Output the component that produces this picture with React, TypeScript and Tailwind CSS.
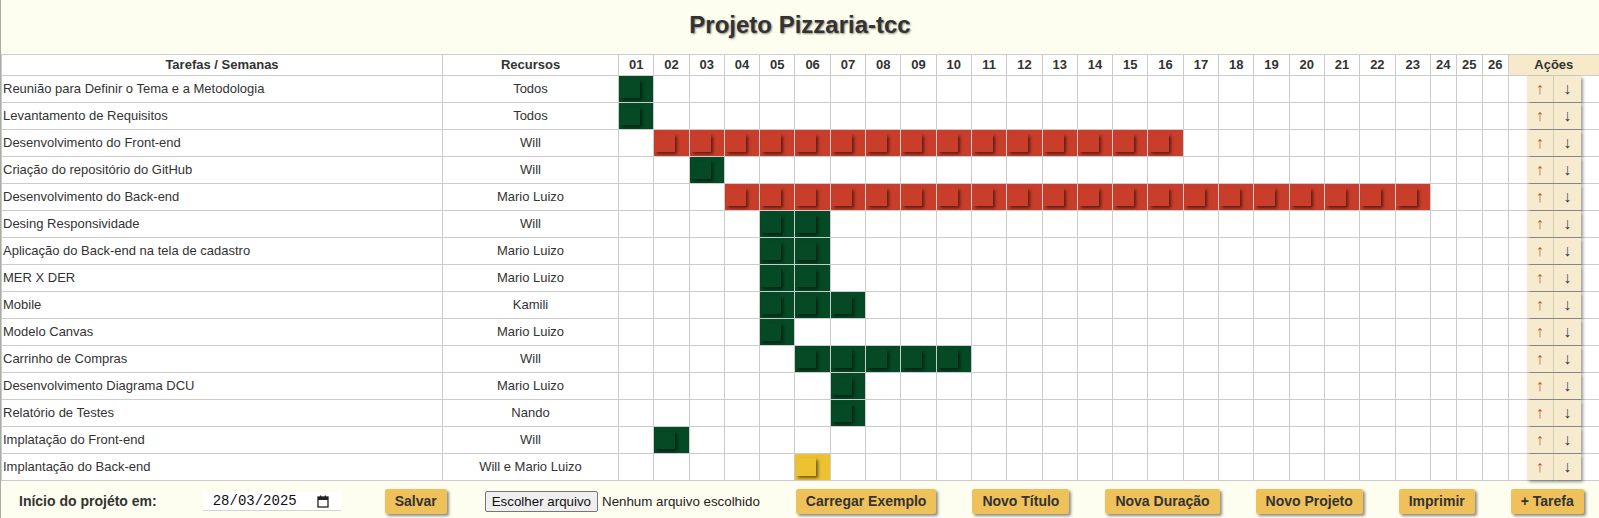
import React from "react"

type Color = "green" | "red" | "yellow"
type Task = { name: string; resource: string; start: number; end: number; color: Color }

const tasks: Task[] = [
	{ name: "Reunião para Definir o Tema e a Metodologia", resource: "Todos", start: 1, end: 1, color: "green" },
	{ name: "Levantamento de Requisitos", resource: "Todos", start: 1, end: 1, color: "green" },
	{ name: "Desenvolvimento do Front-end", resource: "Will", start: 2, end: 16, color: "red" },
	{ name: "Criação do repositório do GitHub", resource: "Will", start: 3, end: 3, color: "green" },
	{ name: "Desenvolvimento do Back-end", resource: "Mario Luizo", start: 4, end: 23, color: "red" },
	{ name: "Desing Responsividade", resource: "Will", start: 5, end: 6, color: "green" },
	{ name: "Aplicação do Back-end na tela de cadastro", resource: "Mario Luizo", start: 5, end: 6, color: "green" },
	{ name: "MER X DER", resource: "Mario Luizo", start: 5, end: 6, color: "green" },
	{ name: "Mobile", resource: "Kamili", start: 5, end: 7, color: "green" },
	{ name: "Modelo Canvas", resource: "Mario Luizo", start: 5, end: 5, color: "green" },
	{ name: "Carrinho de Compras", resource: "Will", start: 6, end: 10, color: "green" },
	{ name: "Desenvolvimento Diagrama DCU", resource: "Mario Luizo", start: 7, end: 7, color: "green" },
	{ name: "Relatório de Testes", resource: "Nando", start: 7, end: 7, color: "green" },
	{ name: "Implatação do Front-end", resource: "Will", start: 2, end: 2, color: "green" },
	{ name: "Implantação do Back-end", resource: "Will e Mario Luizo", start: 6, end: 6, color: "yellow" },
]

const weeks = Array.from({ length: 26 }, (_, i) => i + 1)

const fills: Record<Color, string> = {
	green: "bg-[#054a24]",
	red: "bg-[#c93d2b]",
	yellow: "bg-[#ecc232]",
}

const cell = "border border-[#cccccc] p-0"

const actions = ["Carregar Exemplo", "Novo Título", "Nova Duração", "Novo Projeto", "Imprimir", "+ Tarefa"]

const GoldButton = ({ label }: { label: string }) => (
	<button className="h-[25px] rounded-[2px] bg-[#efc15b] px-[10px] text-[14px] font-bold text-[#333] shadow-[2px_2px_3px_rgba(0,0,0,0.45)]">
		{label}
	</button>
)

const CalendarIcon = () => (
	<svg width="12" height="13" viewBox="0 0 12 13" className="text-[#222]">
		<rect x="1" y="2" width="10" height="10" fill="none" stroke="currentColor" strokeWidth="1.3" />
		<rect x="1" y="2" width="10" height="3" fill="currentColor" />
		<rect x="3" y="0.5" width="1.3" height="2.5" fill="currentColor" />
		<rect x="7.7" y="0.5" width="1.3" height="2.5" fill="currentColor" />
	</svg>
)

export default function App() {
	return (
		<div className="min-h-screen w-full border-l border-[#a5ada5] bg-[#fefef0] font-['Liberation_Sans',Arial,sans-serif] text-[#333]">
			<div className="flex h-[54px] items-center justify-center pb-[5px]">
				<h1 className="text-[24px] font-bold text-[#333] [text-shadow:1px_1px_2px_rgba(0,0,0,0.45)]">Projeto Pizzaria-tcc</h1>
			</div>
			<table className="w-full table-fixed border-collapse bg-white text-[13px]">
				<colgroup>
					<col className="w-[441px]" />
					<col className="w-[176px]" />
					{weeks.map((w) => (
						<col key={w} className={w <= 23 ? "w-[35.3px]" : "w-[26px]"} />
					))}
					<col className="w-[91px]" />
				</colgroup>
				<thead>
					<tr className="h-[21px] font-bold">
						<th className={cell}>Tarefas / Semanas</th>
						<th className={cell}>Recursos</th>
						{weeks.map((w) => (
							<th key={w} className={cell}>
								{String(w).padStart(2, "0")}
							</th>
						))}
						<th className={`${cell} bg-[#f6eacb]`}>Ações</th>
					</tr>
				</thead>
				<tbody>
					{tasks.map((task, index) => (
						<tr key={index} className="h-[27px]">
							<td className={`${cell} truncate pl-[1px] text-left`}>{task.name}</td>
							<td className={`${cell} text-center`}>{task.resource}</td>
							{weeks.map((w) => {
								const active = w >= task.start && w <= task.end
								return (
									<td key={w} className={`${cell} ${active ? fills[task.color] : ""}`}>
										{active && (
											<div
												className={`ml-px h-[18px] w-[20px] shadow-[2px_2px_3px_rgba(0,0,0,0.55)] ${fills[task.color]}`}
											/>
										)}
									</td>
								)
							})}
							<td className={cell}>
								<div className="flex justify-center">
									<button className="h-[26px] w-[27px] border-r border-[#d9cfb4] bg-[#f7ebcf] text-[16px] leading-none text-[#c2541e] shadow-[2px_2px_3px_rgba(0,0,0,0.4)]">
										↑
									</button>
									<button className="h-[26px] w-[27px] bg-[#f7ebcf] text-[16px] leading-none text-[#34414f] shadow-[2px_2px_3px_rgba(0,0,0,0.4)]">
										↓
									</button>
								</div>
							</td>
						</tr>
					))}
				</tbody>
			</table>
			<div className="flex h-[38px] items-center gap-[36px] pl-[18px] pt-[3px]">
				<span className="mr-[10px] text-[14px] font-bold">Início do projéto em:</span>
				<div className="mr-[8px] flex h-[19px] w-[138px] items-center justify-between border-b border-[#d4d4d4] bg-white pl-[10px] pr-[12px]">
					<span className="font-['Liberation_Mono',monospace] text-[14px] text-[#111]">28/03/2025</span>
					<CalendarIcon />
				</div>
				<div className="mr-[2px]">
					<GoldButton label="Salvar" />
				</div>
				<div className="flex items-center gap-[4px] text-[13.33px]">
					<button className="h-[21px] rounded-[2px] border border-[#767676] bg-[#efefef] px-[6px] text-[#111]">Escolher arquivo</button>
					<span className="text-[#222]">Nenhum arquivo escolhido</span>
				</div>
				{actions.map((label) => (
					<GoldButton key={label} label={label} />
				))}
			</div>
		</div>
	)
}
